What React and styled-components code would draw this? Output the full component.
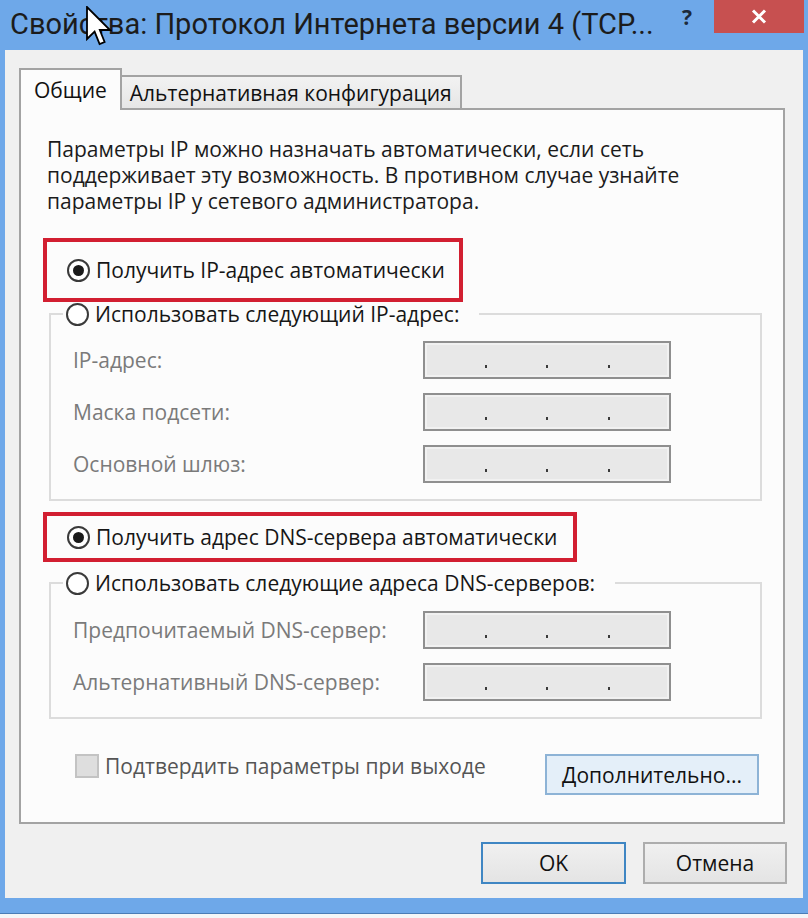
import React from "react";
import styled, { createGlobalStyle } from "styled-components";

const GlobalStyle = createGlobalStyle`
  html, body { margin: 0; padding: 0; background: #f4f6f8; }
  body { font-family: "Open Sans", "Noto Sans", sans-serif; color: #1b1b1b; }
  * { box-sizing: border-box; }
`;

const Window = styled.div`
  position: relative;
  width: 808px;
  height: 914px;
  display: flex;
  flex-direction: column;
  background: #6ea8e9;
  padding: 0 5px 15px;
  border-bottom: 1px solid #4a7db6;
`;

const TitleBar = styled.div`
  height: 50px;
  display: flex;
  align-items: flex-start;
`;

const Title = styled.div`
  flex: 1;
  padding-left: 5px;
  font-family: Roboto, "Noto Sans", sans-serif;
  font-size: 29px;
  line-height: 48px;
  color: #1c1c1c;
  white-space: nowrap;
`;

const Help = styled.div`
  margin: 3px 22px 0 0;
  font-family: "Open Sans", sans-serif;
  font-size: 21px;
  font-weight: 700;
  color: #1c2a3a;
`;

const Close = styled.div`
  width: 90px;
  height: 33px;
  margin-right: -1px;
  background: #c75050;
  display: flex;
  align-items: center;
  justify-content: center;
`;

const Cursor = styled.svg`
  position: absolute;
  left: 86px;
  top: 6px;
`;

const Client = styled.div`
  flex: 1;
  display: flex;
  flex-direction: column;
  background: #f0f0f0;
  padding: 18px 18px 14px 14px;
`;

const TabStrip = styled.div`
  position: relative;
  z-index: 1;
  height: 42px;
  margin-bottom: -2px;
  display: flex;
  align-items: flex-start;
`;

const Tab = styled.div`
  height: ${(p) => (p.$active ? "42px" : "33px")};
  margin-top: ${(p) => (p.$active ? "0" : "7px")};
  margin-left: ${(p) => (p.$active ? "0" : "-2px")};
  padding: 0 ${(p) => (p.$active ? "13px" : "8px")};
  display: flex;
  align-items: center;
  font-size: 21px;
  white-space: nowrap;
  border: 2px solid #a3a3a3;
  border-bottom: none;
  background: ${(p) =>
    p.$active ? "#fcfcfc" : "linear-gradient(#f2f2f2, #e6e6e6)"};
  color: #111;
`;

const Panel = styled.div`
  flex: 1;
  display: flex;
  flex-direction: column;
  background: #fcfcfc;
  border: 2px solid #a3a3a3;
  padding: 26px 21px 0 22px;
`;

const Description = styled.p`
  margin: 0 0 0 4px;
  font-size: 21px;
  line-height: 26px;
  white-space: nowrap;
  color: #1b1b1b;
`;

const Highlight = styled.div`
  width: ${(p) => p.$width}px;
  height: ${(p) => p.$height}px;
  margin-top: ${(p) => p.$top}px;
  border: 4px solid #d21f31;
  padding-left: 20px;
  display: flex;
  align-items: center;
`;

const Option = styled.label`
  display: flex;
  align-items: center;
  gap: 6px;
  font-size: 21px;
  line-height: 24px;
  white-space: nowrap;
  color: #161616;
`;

const Radio = styled.span`
  width: 23px;
  height: 23px;
  flex-shrink: 0;
  border-radius: 50%;
  border: 2px solid #3a3a3a;
  background: #fff;
  display: flex;
  align-items: center;
  justify-content: center;
  &::after {
    content: "";
    display: ${(p) => (p.$checked ? "block" : "none")};
    width: 11px;
    height: 11px;
    border-radius: 50%;
    background: #1a1a1a;
  }
`;

const Group = styled.fieldset`
  margin: ${(p) => p.$top}px 0 0 6px;
  padding: 0;
  min-width: 0;
  border: 2px solid #dcdcdc;
`;

const GroupTitle = styled.legend`
  margin-left: 12px;
  padding: 0 20px 0 3px;
`;

const FieldGrid = styled.div`
  display: grid;
  grid-template-columns: 350px 248px;
  row-gap: 14px;
  align-items: center;
  padding: ${(p) => p.$top}px 0 16px 22px;
`;

const FieldLabel = styled.span`
  font-size: 21px;
  white-space: nowrap;
  color: #7a7a7a;
`;

const IpBox = styled.div`
  height: 38px;
  display: flex;
  justify-content: space-evenly;
  align-items: flex-end;
  padding-bottom: 9px;
  background: #e8e8e8;
  border: 2px solid #8f8f8f;
  box-shadow: inset 0 0 0 2px #f1f1f1;
`;

const Dot = styled.span`
  width: 2px;
  height: 3px;
  background: #3a3a3a;
`;

const Footer = styled.div`
  margin: 35px 3px 0 32px;
  display: flex;
  justify-content: space-between;
  align-items: flex-start;
`;

const CheckRow = styled.label`
  display: flex;
  align-items: center;
  gap: 6px;
  height: 24px;
  font-size: 21px;
  white-space: nowrap;
  color: #555;
`;

const CheckBox = styled.span`
  width: 24px;
  height: 24px;
  background: #dedede;
  border: 2px solid #c3c3c3;
`;

const Button = styled.button`
  width: ${(p) => p.$width}px;
  height: ${(p) => p.$height}px;
  font-family: "Open Sans", "Noto Sans", sans-serif;
  font-size: 21px;
  color: #111;
  padding: 0;
  border: 2px solid
    ${(p) => (p.$variant === "hover" ? "#8db3d6" : p.$variant === "default" ? "#3f86c3" : "#adadad")};
  background: ${(p) =>
    p.$variant === "hover" ? "#e4eff9" : "linear-gradient(#f0f0f0, #e4e4e4)"};
`;

const DialogButtons = styled.div`
  margin: 18px -2px 0 0;
  display: flex;
  justify-content: flex-end;
  gap: 17px;
`;

const IpField = () => (
  <IpBox>
    <Dot />
    <Dot />
    <Dot />
  </IpBox>
);

const fieldsIp = ["IP-адрес:", "Маска подсети:", "Основной шлюз:"];
const fieldsDns = ["Предпочитаемый DNS-сервер:", "Альтернативный DNS-сервер:"];

export default function App() {
  return (
    <>
      <GlobalStyle />
      <Window>
        <TitleBar>
          <Title>Свойства: Протокол Интернета версии 4 (TCP...</Title>
          <Help>?</Help>
          <Close>
            <svg width="16" height="15" viewBox="0 0 16 15">
              <path d="M2 1.5 L14 13.5 M14 1.5 L2 13.5" stroke="#fff" strokeWidth="3" />
            </svg>
          </Close>
        </TitleBar>
        <Cursor width="26" height="42" viewBox="0 0 13 21">
          <path
            d="M0.5 0.5 L0.5 16.5 L4.3 12.8 L6.8 19 L9.3 18 L6.9 12 L12 12 Z"
            fill="#fff"
            stroke="#000"
            strokeWidth="0.9"
            strokeLinejoin="miter"
          />
        </Cursor>
        <Client>
          <TabStrip>
            <Tab $active>Общие</Tab>
            <Tab>Альтернативная конфигурация</Tab>
          </TabStrip>
          <Panel>
            <Description>
              Параметры IP можно назначать автоматически, если сеть
              <br />
              поддерживает эту возможность. В противном случае узнайте
              <br />
              параметры IP у сетевого администратора.
            </Description>

            <Highlight $width={420} $height={64} $top={24}>
              <Option>
                <Radio $checked />
                Получить IP-адрес автоматически
              </Option>
            </Highlight>

            <Group $top={0}>
              <GroupTitle>
                <Option>
                  <Radio />
                  Использовать следующий IP-адрес:
                </Option>
              </GroupTitle>
              <FieldGrid $top={15}>
                {fieldsIp.map((f) => (
                  <React.Fragment key={f}>
                    <FieldLabel>{f}</FieldLabel>
                    <IpField />
                  </React.Fragment>
                ))}
              </FieldGrid>
            </Group>

            <Highlight $width={534} $height={50} $top={11}>
              <Option>
                <Radio $checked />
                Получить адрес DNS-сервера автоматически
              </Option>
            </Highlight>

            <Group $top={9}>
              <GroupTitle>
                <Option>
                  <Radio />
                  Использовать следующие адреса DNS-серверов:
                </Option>
              </GroupTitle>
              <FieldGrid $top={16}>
                {fieldsDns.map((f) => (
                  <React.Fragment key={f}>
                    <FieldLabel>{f}</FieldLabel>
                    <IpField />
                  </React.Fragment>
                ))}
              </FieldGrid>
            </Group>

            <Footer>
              <CheckRow>
                <CheckBox />
                Подтвердить параметры при выходе
              </CheckRow>
              <Button $variant="hover" $width={214} $height={41}>
                Дополнительно...
              </Button>
            </Footer>
          </Panel>
          <DialogButtons>
            <Button $variant="default" $width={145} $height={42}>
              OK
            </Button>
            <Button $width={144} $height={42}>
              Отмена
            </Button>
          </DialogButtons>
        </Client>
      </Window>
    </>
  );
}
